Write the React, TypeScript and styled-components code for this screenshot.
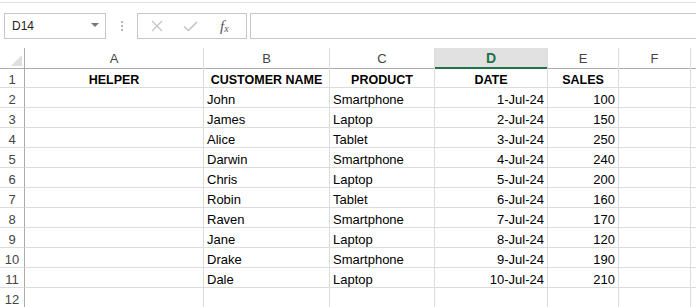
import React from "react";
import styled, { createGlobalStyle } from "styled-components";

const Global = createGlobalStyle`
  html, body { margin: 0; padding: 0; background: #fff; }
  body { font-family: "Liberation Sans", Arial, sans-serif; overflow: hidden; }
`;

const Page = styled.div`
  width: 696px;
  height: 307px;
  overflow: hidden;
  background: #fff;
`;

const TopRule = styled.div`
  border-top: 1px solid #e1e1e1;
  margin-top: 2px;
  box-sizing: border-box;
  height: 11px;
`;

const Toolbar = styled.div`
  display: flex;
  align-items: stretch;
  height: 26px;
  padding-left: 4px;
  margin-bottom: 9px;
`;

const NameBox = styled.div`
  width: 102px;
  box-sizing: border-box;
  border: 1px solid #c6c6c6;
  display: flex;
  align-items: center;
  justify-content: space-between;
  padding: 0 6px 0 7px;
  font-size: 12px;
  color: #222;
`;

const Caret = styled.span`
  width: 0;
  height: 0;
  border-left: 4px solid transparent;
  border-right: 4px solid transparent;
  border-top: 4px solid #777;
  margin-top: -3px;
`;

const Grip = styled.div`
  width: 31px;
  display: flex;
  flex-direction: column;
  align-items: center;
  justify-content: center;
  gap: 2px;
  & > span {
    width: 2px;
    height: 2px;
    background: #b5b5b5;
  }
`;

const FxBox = styled.div`
  width: 110px;
  box-sizing: border-box;
  border: 1px solid #c6c6c6;
  display: flex;
  align-items: center;
  padding-left: 13px;
`;

const FxButton = styled.div<{ $w: number }>`
  width: ${(p) => p.$w}px;
  display: flex;
  align-items: center;
  justify-content: flex-start;
`;

const FxLabel = styled.span`
  font-family: "Liberation Serif", "Times New Roman", serif;
  font-style: italic;
  font-size: 15px;
  color: #555;
  & > small {
    font-size: 10px;
    position: relative;
    top: 1px;
  }
`;

const FormulaInput = styled.div`
  flex: 1;
  margin-left: 3px;
  border: 1px solid #c6c6c6;
  border-right: none;
`;

const Grid = styled.div`
  display: grid;
  grid-template-columns: 25px 179px 126px 105px 113px 71px 72px 1fr;
  grid-auto-rows: 20px;
  font-family: "Liberation Sans", Arial, sans-serif;
  font-size: 13px;
`;

const Corner = styled.div`
  height: 21px;
  box-sizing: border-box;
  border-right: 1px solid #ababab;
  border-bottom: 1px solid #ababab;
  position: relative;
  &::after {
    content: "";
    position: absolute;
    right: 2px;
    bottom: 2px;
    width: 0;
    height: 0;
    border-left: 11px solid transparent;
    border-bottom: 11px solid #dfdfdf;
  }
`;

const ColHead = styled.div<{ $sel?: boolean }>`
  height: 21px;
  box-sizing: border-box;
  border-right: 1px solid #dadcdd;
  border-bottom: ${(p) => (p.$sel ? "2px solid #217346" : "1px solid #ababab")};
  background: ${(p) => (p.$sel ? "#e1e1e1" : "#fff")};
  color: ${(p) => (p.$sel ? "#217346" : "#444")};
  font-weight: ${(p) => (p.$sel ? 700 : 400)};
  font-size: ${(p) => (p.$sel ? "14px" : "13px")};
  text-align: center;
  line-height: 20px;
  padding-top: ${(p) => (p.$sel ? "0" : "1px")};
`;

const RowHead = styled.div`
  box-sizing: border-box;
  border-right: 1px solid #ababab;
  border-bottom: 1px solid #dadcdd;
  color: #444;
  text-align: center;
  padding-top: 4px;
  line-height: 16px;
`;

const Cell = styled.div<{ $align?: "left" | "right" | "center"; $bold?: boolean }>`
  box-sizing: border-box;
  border-right: 1px solid #dadcdd;
  border-bottom: 1px solid #dadcdd;
  color: #000;
  padding: 4px 3px 0 3px;
  line-height: 16px;
  white-space: nowrap;
  overflow: hidden;
  text-align: ${(p) => p.$align || "left"};
  font-weight: ${(p) => (p.$bold ? 700 : 400)};
  font-size: ${(p) => (p.$bold ? "12.5px" : "13px")};
`;

const cols = ["A", "B", "C", "D", "E", "F", ""];

const data: [string, string, string, string][] = [
  ["John", "Smartphone", "1-Jul-24", "100"],
  ["James", "Laptop", "2-Jul-24", "150"],
  ["Alice", "Tablet", "3-Jul-24", "250"],
  ["Darwin", "Smartphone", "4-Jul-24", "240"],
  ["Chris", "Laptop", "5-Jul-24", "200"],
  ["Robin", "Tablet", "6-Jul-24", "160"],
  ["Raven", "Smartphone", "7-Jul-24", "170"],
  ["Jane", "Laptop", "8-Jul-24", "120"],
  ["Drake", "Smartphone", "9-Jul-24", "190"],
  ["Dale", "Laptop", "10-Jul-24", "210"],
];

export default function App() {
  return (
    <Page>
      <Global />
      <TopRule />
      <Toolbar>
        <NameBox>
          <span>D14</span>
          <Caret />
        </NameBox>
        <Grip>
          <span />
          <span />
          <span />
        </Grip>
        <FxBox>
          <FxButton $w={32}>
            <svg width="12" height="12" viewBox="0 0 12 12">
              <path d="M1 1 L11 11 M11 1 L1 11" stroke="#c3c3c3" strokeWidth="1.2" fill="none" />
            </svg>
          </FxButton>
          <FxButton $w={37}>
            <svg width="15" height="11" viewBox="0 0 15 11">
              <path d="M1 5.5 L5.5 9.5 L14 1" stroke="#c3c3c3" strokeWidth="1.6" fill="none" />
            </svg>
          </FxButton>
          <FxButton $w={20}>
            <FxLabel>
              f<small>x</small>
            </FxLabel>
          </FxButton>
        </FxBox>
        <FormulaInput />
      </Toolbar>
      <Grid>
        <Corner />
        {cols.map((c, i) => (
          <ColHead key={i} $sel={c === "D"}>
            {c}
          </ColHead>
        ))}
        <RowHead>1</RowHead>
        <Cell $align="center" $bold>HELPER</Cell>
        <Cell $align="center" $bold>CUSTOMER NAME</Cell>
        <Cell $align="center" $bold>PRODUCT</Cell>
        <Cell $align="center" $bold>DATE</Cell>
        <Cell $align="center" $bold>SALES</Cell>
        <Cell />
        <Cell />
        {data.map((r, i) => (
          <React.Fragment key={i}>
            <RowHead>{i + 2}</RowHead>
            <Cell />
            <Cell>{r[0]}</Cell>
            <Cell>{r[1]}</Cell>
            <Cell $align="right">{r[2]}</Cell>
            <Cell $align="right">{r[3]}</Cell>
            <Cell />
            <Cell />
          </React.Fragment>
        ))}
        <RowHead>12</RowHead>
        <Cell />
        <Cell />
        <Cell />
        <Cell />
        <Cell />
        <Cell />
        <Cell />
      </Grid>
    </Page>
  );
}
